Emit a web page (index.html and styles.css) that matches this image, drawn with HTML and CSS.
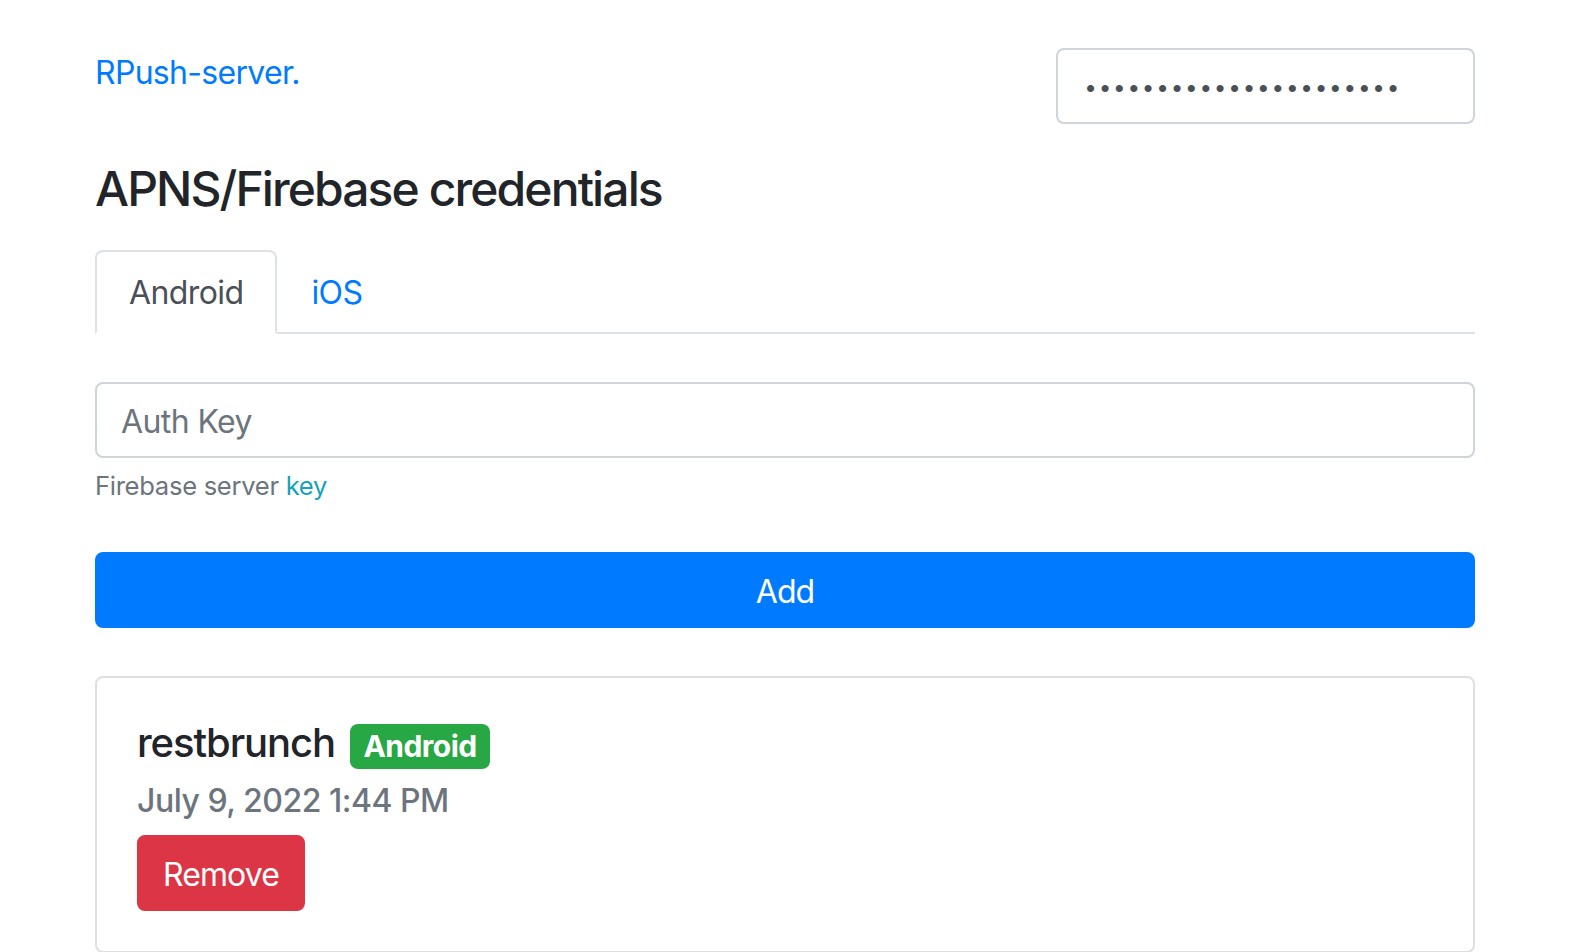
FILE: index.html
```html
<!DOCTYPE html>
<html lang="en">
<head>
<meta charset="utf-8">
<title>RPush-server</title>
<link rel="stylesheet" href="styles.css">
</head>
<body>
<div class="container">
  <header class="header">
    <a class="brand" href="#">RPush-server.</a>
    <div class="password-field" aria-label="password">••••••••••••••••••••••</div>
  </header>

  <h3 class="page-title">APNS/Firebase credentials</h3>

  <nav class="tabs">
    <a class="tab active" href="#">Android</a>
    <a class="tab" href="#">iOS</a>
  </nav>

  <div class="tab-content">
    <div class="form-group">
      <input class="form-control" type="text" placeholder="Auth Key">
      <small class="help">Firebase server <a href="#" class="help-link">key</a></small>
    </div>
    <button class="btn btn-primary btn-block">Add</button>

    <div class="card">
      <h5 class="card-title">restbrunch<span class="badge">Android</span></h5>
      <h6 class="card-subtitle">July 9, 2022 1:44 PM</h6>
      <button class="btn btn-danger">Remove</button>
    </div>
  </div>
</div>
</body>
</html>
```

FILE: styles.css
```css
* { box-sizing: border-box; }

html, body {
  margin: 0;
  padding: 0;
  background: #fff;
}

body {
  font-family: Inter, "Noto Sans", "Liberation Sans", sans-serif;
  color: #212529;
  font-size: 32px;
  line-height: 1.5;
}

.container {
  width: 1380px;
  margin: 0 auto;
  padding-top: 48px;
}

.header {
  display: flex;
  justify-content: space-between;
  align-items: flex-start;
}

.brand {
  color: #007bff;
  text-decoration: none;
  font-size: 32px;
  line-height: 50px;
  letter-spacing: -0.7px;
}

.password-field {
  width: 419px;
  height: 76px;
  border: 2px solid #ced4da;
  border-radius: 8px;
  padding: 4px 0 0 28px;
  display: flex;
  align-items: center;
  color: #495057;
  font-family: "Liberation Sans", sans-serif;
  font-size: 26px;
  letter-spacing: 5.3px;
  overflow: hidden;
  white-space: nowrap;
}

.page-title {
  margin: 31px 0 28px;
  font-size: 48px;
  line-height: 67px;
  font-weight: 500;
  letter-spacing: -1.9px;
}

.tabs {
  display: flex;
  border-bottom: 2px solid #dee2e6;
}

.tab {
  display: block;
  padding: 16px 32px;
  line-height: 50px;
  height: 84px;
  font-size: 32px;
  color: #007bff;
  text-decoration: none;
  border: 2px solid transparent;
  border-radius: 8px 8px 0 0;
  margin-bottom: -2px;
  letter-spacing: -0.6px;
}

.tab.active {
  color: #495057;
  background: #fff;
  border-color: #dee2e6 #dee2e6 #fff;
}

.tab-content {
  padding-top: 48px;
}

.form-control {
  display: block;
  width: 100%;
  height: 76px;
  padding: 2px 24px 0;
  font-family: inherit;
  font-size: 32px;
  color: #495057;
  border: 2px solid #ced4da;
  border-radius: 8px;
  outline: none;
  letter-spacing: -0.6px;
}

.form-control::placeholder {
  color: #6c757d;
  opacity: 1;
}

.help {
  display: block;
  margin-top: 9px;
  font-size: 25.6px;
  line-height: 38.4px;
  color: #6c757d;
  letter-spacing: -0.3px;
}

.help-link {
  color: #17a2b8;
  text-decoration: none;
}

.btn {
  display: inline-block;
  font-family: inherit;
  font-size: 32px;
  line-height: 48px;
  padding: 14px 24px 10px;
  border: 2px solid transparent;
  border-radius: 8px;
  color: #fff;
  cursor: pointer;
  letter-spacing: -0.9px;
}

.btn-block {
  display: block;
  width: 100%;
  margin-top: 47px;
}

.btn-primary {
  background: #007bff;
  border-color: #007bff;
}

.btn-danger {
  background: #dc3545;
  border-color: #dc3545;
  margin-top: 15px;
}

.card {
  margin-top: 48px;
  border: 2px solid rgba(0, 0, 0, 0.125);
  border-radius: 8px;
  padding: 40px;
}

.card-title {
  margin: 0 0 22px;
  font-size: 40px;
  line-height: 50px;
  font-weight: 500;
  letter-spacing: -1.1px;
}

.badge {
  display: inline-block;
  margin-left: 15px;
  padding: 7.5px 13.5px;
  font-size: 30px;
  line-height: 1;
  font-weight: 700;
  color: #fff;
  background: #28a745;
  border-radius: 8px;
  vertical-align: baseline;
  letter-spacing: -0.5px;
}

.card-subtitle {
  margin: -9px 0 0;
  font-size: 32px;
  line-height: 38.4px;
  font-weight: 500;
  color: #6c757d;
  letter-spacing: -0.5px;
}
```
